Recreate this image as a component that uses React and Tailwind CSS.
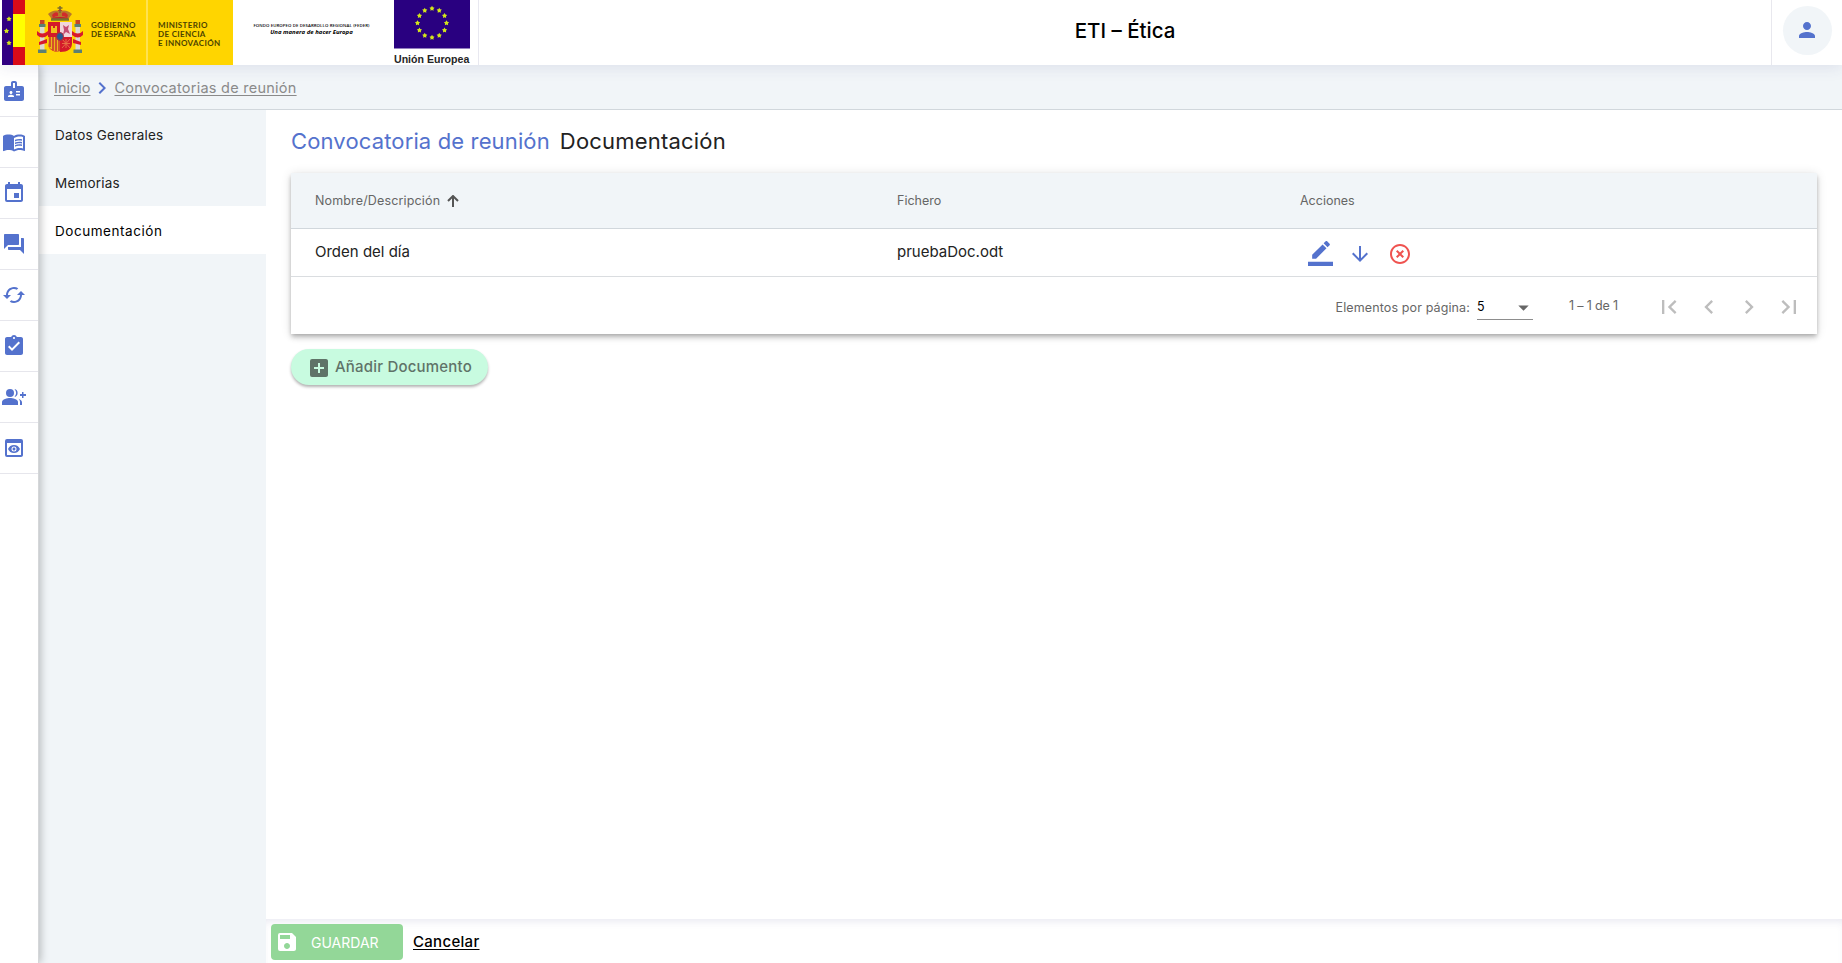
import React from "react";
import { MdBadge, MdMenuBook, MdEvent, MdForum, MdCached, MdAssignmentTurnedIn, MdPreview, MdPerson, MdArrowDownward, MdHighlightOff, MdFirstPage, MdLastPage, MdChevronLeft, MdChevronRight, MdAddBox, MdSave, MdArrowDropDown } from "react-icons/md";

function GroupAdd({ size = 24 }) {
  return (
    <svg width={size} height={size} viewBox="0 0 24 24" fill="currentColor">
      <circle cx="8" cy="8" r="4" />
      <path d="M8 13c-2.700 0-8 1.300-8 4v3h16v-3c0-2.700-5.300-4-8-4z" />
      <path d="M12.500 4.100a6 6 0 0 1 0 7.800 4 4 0 0 0 0-7.800zM16.500 13.800c2 .9 3.500 2 3.500 3.700V20h-2v-3c0-1.200-.6-2.300-1.500-3.200zM20 7h1.500v2H24v2h-2.500v2H20v-2h-2V9h2z" />
    </svg>
  );
}

function CoatOfArms() {
  return (
    <svg width="46" height="50" viewBox="0 0 46 50">
      <path d="M13 10q1-4 6-3l4-3 4 3q5-1 6 3l-2 4H15z" fill="#c41c2c" />
      <path d="M11 9q5-5 12-3 7-2 12 3l-3 4q-9-2-18 0z" fill="#b8782c" />
      <path d="M15 10q3-4 6-2v3q-3 0-5 2zM31 10q-3-4-6-2v3q3 0 5 2z" fill="#d12a2a" />
      <path d="M23 1v7M20.500 3h5" stroke="#7a6a30" strokeWidth="1.500" />
      <path d="M14 14.500h18" stroke="#76702f" strokeWidth="2.500" />
      <path d="M3 21h4.500v24H3zM38.500 21H43v24h-4.500z" fill="#dcd9d4" />
      <path d="M2 19h6.500v3H2zM37.500 19H44v3h-6.500zM1 44.500h8.500V48H1zM36.500 44.500H45V48h-8.500z" fill="#5c8074" />
      <path d="M3 15h4.500v4H3zM38.500 15H43v4h-4.500z" fill="#c5432a" />
      <path d="M0 26q5 5 11 0v4q-6 5-11 0zM35 26q6 5 11 0v4q-5 5-11 0zM2 37l8-3v4l-8 2zM36 34l8 3v3l-8-2z" fill="#d8192c" />
      <path d="M11 17h24v21q0 9-12 9T11 38z" fill="#d4192a" />
      <path d="M23 17h12v15H23z" fill="#f0d5dc" />
      <path d="M26 20l3 2 3-2-1 4 2 5-4-2-3 3 1-5z" fill="#c64c72" />
      <path d="M14 28v-7h2v2h2v-2h2v7z" fill="#f1bf1e" />
      <path d="M11 32h12v14.900Q11 46 11 38z" fill="#e9b91c" />
      <path d="M13 32v10M16 32v13M19 32v14M22 32v14" stroke="#ce2430" strokeWidth="1.400" />
      <path d="M25 34l8 9m0-9l-8 9M25 38.500h8M29 34v9" stroke="#e87545" strokeWidth=".9" />
      <ellipse cx="23" cy="31.500" rx="3.500" ry="4" fill="#245a93" stroke="#b42b3b" strokeWidth="1" />
    </svg>
  );
}

const STARS = Array.from({ length: 12 }, (_, i) => [
  38 + 14.500 * Math.sin((i * Math.PI) / 6),
  23 - 14.500 * Math.cos((i * Math.PI) / 6),
]);

function Star({ x, y, r }) {
  const pts = Array.from({ length: 10 }, (_, i) => {
    const d = i % 2 ? r * 0.55 : r;
    const a = (i * Math.PI) / 5;
    return `${x + d * Math.sin(a)},${y - d * Math.cos(a)}`;
  }).join(" ");
  return <polygon points={pts} fill="#d3e61b" />;
}

function Header() {
  return (
    <header className="relative z-20 flex h-[65px] w-full bg-white shadow-[0_3px_14px_rgba(60,60,130,0.1)]">
      <div className="flex w-[479px] shrink-0 border-r border-[#e8e8f0] pl-[2px]">
        <svg width="23" height="65" viewBox="0 0 23 65" className="shrink-0">
          <path d="M0 0h11v65H0z" fill="#310082" />
          <path d="M11 0h12v65H11z" fill="#d90b18" />
          <path d="M11 14h12v33H11z" fill="#ff0" />
          <Star x={7} y={19} r={2.700} />
          <Star x={4.500} y={31} r={2.700} />
          <Star x={7} y={43} r={2.700} />
        </svg>
        <div className="flex h-[65px] w-[121px] shrink-0 bg-[#ffd500] pl-[12px] pt-[5px]">
          <CoatOfArms />
          <div className="ml-[8px] mt-[16px] whitespace-nowrap font-[Lato] text-[8px] font-bold leading-[9px] text-[#4c4300]">
            <div className="tracking-[0.3px]">GOBIERNO</div>
            <div className="tracking-[0.15px]">DE ESPAÑA</div>
          </div>
        </div>
        <div className="h-[65px] w-[87px] shrink-0 border-l-2 border-[#ffe250] bg-[#ffd500] pl-[10px] pt-[21px] font-[Lato] text-[8px] font-bold leading-[9px] tracking-[0.35px] text-[#4c4300]">
          <div>MINISTERIO</div>
          <div>DE CIENCIA</div>
          <div>E INNOVACIÓN</div>
        </div>
        <div className="ml-[20px] w-[117px] shrink-0 whitespace-nowrap pt-[22px] text-center font-['Open_Sans'] text-black">
          <div className="text-[4.300px] font-semibold leading-[7px] tracking-[0.1px]">FONDO EUROPEO DE DESARROLLO REGIONAL (FEDER)</div>
          <div className="text-[6px] font-bold italic leading-[7px]">Una manera de hacer Europa</div>
        </div>
        <div className="ml-[24px] w-[76px] shrink-0">
          <svg width="76" height="49" viewBox="0 0 76 49">
            <path d="M0 0h76v48.500H0z" fill="#290080" />
            {STARS.map(([x, y], i) => <Star key={i} x={x} y={y} r={2.700} />)}
          </svg>
          <div className="mt-[3px] whitespace-nowrap font-['Liberation_Sans'] text-[10.600px] font-bold leading-[14px] text-[#252525]">Unión Europea</div>
        </div>
      </div>
      <h1 className="flex flex-1 items-center justify-center pb-[3px] text-[20.500px] font-medium text-black">ETI – Ética</h1>
      <div className="flex w-[71px] shrink-0 justify-center border-l border-[#e8e8ee] pt-[6px]">
        <div className="flex h-[49px] w-[49px] items-center justify-center rounded-full bg-[#f1f5f8] pb-[2px] text-[#5472cd]">
          <MdPerson size={24} />
        </div>
      </div>
    </header>
  );
}

const RAIL = [MdBadge, MdMenuBook, MdEvent, MdForum, MdCached, MdAssignmentTurnedIn, GroupAdd, MdPreview];

function Rail() {
  return (
    <nav className="relative z-10 w-[39px] shrink-0 border-r border-[#d5d7d9] bg-white shadow-[1px_0_9px_rgba(0,0,0,0.28)]">
      {RAIL.map((Icon, i) => (
        <div key={i} className="flex h-[51px] items-center border-b border-[#e6e6ec] pl-[2px] text-[#5472cd] first:h-[52px] last:h-[51px]">
          <Icon size={24} />
        </div>
      ))}
    </nav>
  );
}

function DocumentTable() {
  return (
    <section className="flex h-[161px] flex-col bg-white text-[#666] shadow-[0_2px_4px_-1px_rgba(0,0,0,0.2),0_4px_5px_rgba(0,0,0,0.14),0_1px_10px_rgba(0,0,0,0.12)]">
      <div className="flex h-[56px] items-center border-b border-[#d1d7dc] bg-[#f1f5f8] pl-[24px] pt-px text-[12.500px]">
        <div className="flex w-[582px] items-center gap-[7px]">
          <span className="tracking-[0.15px]">Nombre/Descripción</span>
          <svg width="12" height="12" viewBox="0 0 12 12" fill="none" stroke="#555" strokeWidth="2"><path d="M6 12V1.500M1 6l5-5 5 5" /></svg>
        </div>
        <div className="w-[403px]">Fichero</div>
        <div>Acciones</div>
      </div>
      <div className="flex h-[48px] items-center border-b border-[#dadde0] pl-[24px] text-[15px] text-[#222]">
        <div className="w-[582px]">Orden del día</div>
        <div className="w-[403px]">pruebaDoc.odt</div>
        <div className="flex items-center pl-[8px] pt-[2px] text-[#5472cd]">
          <svg width="25" height="25" viewBox="0 0 24 24" fill="currentColor">
            <path d="M17.750 7L14 3.250l-10 10V17h3.750l10-10zm2.960-2.960c.39-.39.39-1.020 0-1.410L18.370.29a1 1 0 0 0-1.410 0L15 2.250 18.750 6l1.960-1.960zM0 20h24v4H0z" />
          </svg>
          <MdArrowDownward size={24} className="ml-[15px]" />
          <MdHighlightOff size={24} color="#ef5350" className="ml-[16px]" />
        </div>
      </div>
      <div className="flex flex-1 items-center justify-end pr-[14px] pt-[2px] text-[12.500px]">
        <span className="mt-[3px] tracking-[0.12px]">Elementos por página:</span>
        <div className="ml-[7px] mt-[3px] flex h-[24px] w-[56px] items-center justify-between border-b border-[#8d8d8d] text-black">5<MdArrowDropDown size={25} color="#666" className="-mr-[3px]" /></div>
        <span className="-mt-px ml-[36px] mr-[37px] tracking-[-0.15px]">1 – 1 de 1</span>
        <div className="flex gap-[12px] text-[#bdbdbd]">
          <MdFirstPage size={28} /><MdChevronLeft size={28} /><MdChevronRight size={28} /><MdLastPage size={28} />
        </div>
      </div>
    </section>
  );
}

export default function App() {
  return (
    <div className="flex h-[963px] w-full flex-col overflow-hidden whitespace-nowrap bg-white font-[Inter,sans-serif]">
      <Header />
      <div className="flex min-h-0 flex-1">
        <Rail />
        <div className="flex min-w-0 flex-1 flex-col">
          <div className="flex h-[45px] shrink-0 items-center border-b border-[#d1d7dc] bg-[#f1f5f8] pl-[15px] pt-[2px] text-[14.500px] text-[#8a8a8a]">
            <a className="underline underline-offset-2">Inicio</a>
            <MdChevronRight size={24} color="#5472cd" stroke="#5472cd" strokeWidth="0" />
            <a className="tracking-[0.25px] underline underline-offset-2">Convocatorias de reunión</a>
          </div>
          <div className="flex min-h-0 flex-1">
            <aside className="w-[227px] shrink-0 bg-[#f1f5f8] text-[13.500px] text-[#222]">
              <div className="flex h-[48px] items-center pl-[16px] pt-[2px] tracking-[0.2px]">Datos Generales</div>
              <div className="flex h-[48px] items-center pl-[16px] pt-[2px] tracking-[0.2px]">Memorias</div>
              <div className="flex h-[48px] items-center bg-white pl-[16px] pt-[2px] tracking-[0.55px] text-black">Documentación</div>
            </aside>
            <main className="flex min-w-0 flex-1 flex-col">
              <div className="flex-1 pl-[25px] pr-[25px] pt-[15px]">
                <h2 className="flex h-[32px] items-center gap-[10px] text-[22px] tracking-[0.14px] text-[#222]">
                  <span className="text-[#5472cd]">Convocatoria de reunión</span>
                  <span className="tracking-[0.2px]">Documentación</span>
                </h2>
                <div className="h-[16px]" />
                <DocumentTable />
                <button className="mt-[15px] flex h-[36px] w-[197px] items-center rounded-full bg-[#c8fbe0] pl-[16px] pt-px text-[15px] font-medium text-[#5f7368] shadow-[0_2px_3px_rgba(0,0,0,0.3)]">
                  <MdAddBox size={24} /><span className="ml-[4px] tracking-[0.2px]">Añadir Documento</span>
                </button>
              </div>
              <footer className="flex h-[44px] shrink-0 items-center pl-[5px] pt-[2px] shadow-[inset_0_6px_8px_-4px_rgba(60,60,130,0.12)]">
                <button className="flex h-[36px] w-[132px] items-center rounded-[4px] bg-[#93d798] pl-[4px] text-[14px] text-white">
                  <MdSave size={24} /><span className="ml-[12px]">GUARDAR</span>
                </button>
                <a className="ml-[10px] text-[15px] font-medium tracking-[0.3px] text-black underline underline-offset-2">Cancelar</a>
              </footer>
            </main>
          </div>
        </div>
      </div>
    </div>
  );
}
